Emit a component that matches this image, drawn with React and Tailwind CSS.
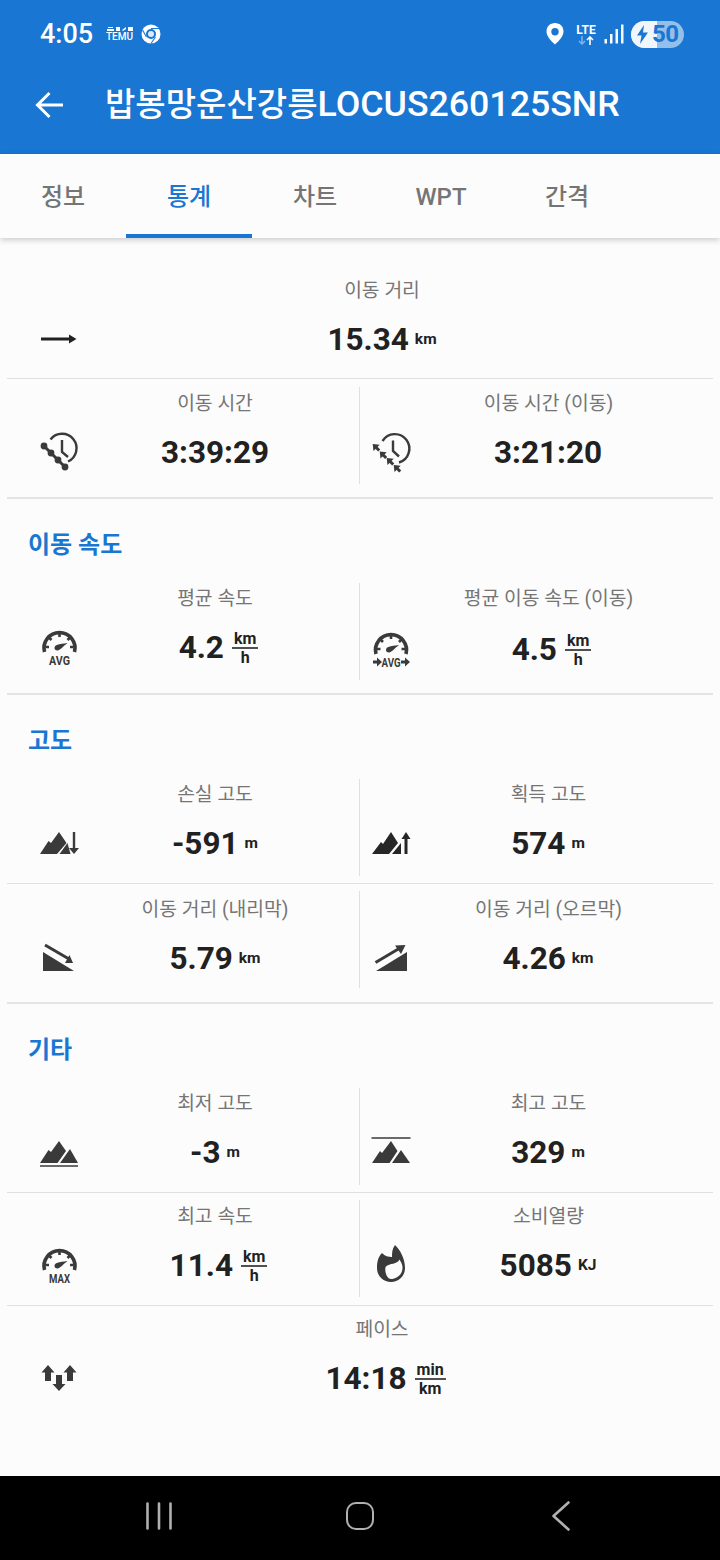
import React from "react";

const DARK = "#3a3a3a";

// all stat icons share a 40x40 box, centered on the value line
const IconBox = ({ children }) => (
    <svg width="40" height="40" viewBox="0 0 40 40" fill={DARK} className="block shrink-0 overflow-visible">
        {children}
    </svg>
);

const ArrowRightIcon = () => (
    <IconBox>
        <path d="M2 20 H32" stroke="#212121" strokeWidth="3" fill="none" />
        <path d="M30 15.5 L37.5 20 L30 24.5 Z" fill="#212121" />
    </IconBox>
);

const ClockChainIcon = () => (
    <IconBox>
        <path d="M11.5 7.5 A14.5 14.5 0 1 1 29 29.5" stroke={DARK} strokeWidth="2.4" fill="none" />
        <path d="M23 8 V20 L29 25" stroke={DARK} strokeWidth="2.4" fill="none" />
        <path d="M5 14 L26 35" stroke={DARK} strokeWidth="3" />
        <circle cx="5" cy="14" r="3.4" />
        <circle cx="12" cy="21" r="3.4" />
        <circle cx="19" cy="28" r="3.4" />
        <circle cx="26" cy="35" r="3.4" />
    </IconBox>
);

const SmallArrow = ({ x, y }) => (
    <g transform={`translate(${x} ${y})`}>
        <path d="M0 0 L7 0.8 L0.8 7 Z" />
        <path d="M2.5 2.5 L6.5 6.5" stroke={DARK} strokeWidth="3" />
    </g>
);

const ClockArrowsIcon = () => (
    <IconBox>
        <path d="M11.5 9 A14.5 14.5 0 1 1 28 30.5" stroke={DARK} strokeWidth="2.4" fill="none" />
        <path d="M22 8.5 V19 L28 24.5" stroke={DARK} strokeWidth="2.4" fill="none" />
        <SmallArrow x={1.7} y={12} />
        <SmallArrow x={8.7} y={19.5} />
        <SmallArrow x={15.7} y={26} />
        <SmallArrow x={22.7} y={33} />
    </IconBox>
);

const GaugeDial = ({ cx = 20.5 }) => (
    <g>
        <path d={`M${cx - 15} 25 A15.5 15.5 0 1 1 ${cx + 15} 25`} stroke={DARK} strokeWidth="3.6" fill="none" />
        <path
            d={`M${cx} 6 V10 M${cx - 10.5} 10.5 L${cx - 8} 13 M${cx + 10.5} 10.5 L${cx + 8} 13 M${cx - 14} 20 H${cx - 10.5} M${cx + 14} 20 H${cx + 10.5}`}
            stroke={DARK}
            strokeWidth="2.6"
            fill="none"
        />
        <path d={`M${cx - 5} 21 C${cx - 5} 18 ${cx - 1} 17 ${cx + 8} 16 C${cx + 4} 19 ${cx + 1} 23 ${cx - 2} 23.5 C${cx - 4} 23.5 ${cx - 5} 22.5 ${cx - 5} 21 Z`} />
    </g>
);

const GaugeIcon = ({ label }) => (
    <IconBox>
        <GaugeDial />
        <text x="20.5" y="37.5" fontSize="12.5" fontWeight="700" textAnchor="middle" textLength="21" lengthAdjust="spacingAndGlyphs" fontFamily="Roboto, sans-serif" fill={DARK}>
            {label}
        </text>
    </IconBox>
);

const GaugeMovingIcon = () => (
    <IconBox>
        <GaugeDial cx={20} />
        <text x="20" y="37.5" fontSize="12.5" fontWeight="700" textAnchor="middle" textLength="19" lengthAdjust="spacingAndGlyphs" fontFamily="Roboto, sans-serif" fill={DARK}>
            AVG
        </text>
        <path d="M2 31.5 H6 V28.5 L11 33 L6 37.5 V34.5 H2 Z" />
        <path d="M30 31.5 H34 V28.5 L39 33 L34 37.5 V34.5 H30 Z" />
    </IconBox>
);

const MountainDownIcon = () => (
    <IconBox>
        <path d="M1 31 L9.5 18 L12 20 L20 9 L27.5 20 L18 31 Z" />
        <path d="M20.5 31 L28.5 20 L31.5 31 Z" />
        <path d="M35 9 V26" stroke={DARK} strokeWidth="2.4" />
        <path d="M30 25 H40 L35 31 Z" />
    </IconBox>
);

const MountainUpIcon = () => (
    <IconBox>
        <path d="M1 31 L10 19 L12 21 L20 9 L27 20 L18 31 Z" fill="#262626" />
        <path d="M21 31 L30 20 V31 Z" fill="#262626" />
        <path d="M35 14 V31" stroke="#262626" strokeWidth="3" />
        <path d="M35 9 L39.5 16 H30.5 Z" fill="#262626" />
    </IconBox>
);

const DownhillIcon = () => (
    <IconBox>
        <path d="M4 14 V33 H35 Z" />
        <path d="M6 7 L30 21" stroke={DARK} strokeWidth="3" />
        <path d="M34 25 H26 L30.5 17 Z" />
    </IconBox>
);

const UphillIcon = () => (
    <IconBox>
        <path d="M5 33 H36 V14 Z" />
        <path d="M4.5 24.5 L29 10" stroke={DARK} strokeWidth="3" />
        <path d="M34.5 7 L24 7.5 L30 16 Z" />
    </IconBox>
);

const LowestIcon = () => (
    <IconBox>
        <path d="M1 31 L9.5 18 L12 20 L20 9 L27 19 L18.5 31 Z" />
        <path d="M21 31 L31 17 L39 31 Z" />
        <path d="M1 34 H39" stroke={DARK} strokeWidth="1.6" />
    </IconBox>
);

const HighestIcon = () => (
    <IconBox>
        <path d="M0.5 6 H39.5" stroke={DARK} strokeWidth="1.6" />
        <path d="M1 31 L9 19 L11 21 L20 9 L26.5 19 L18.5 31 Z" />
        <path d="M21 31 L30 18 L39 31 Z" />
    </IconBox>
);

const FlameIcon = () => (
    <IconBox>
        <path d="M24 0 C21 4 21 8 21 12 C17 12 14 11 11 8 C7 12 6 17 6 23 C6 31 12 37 20 37 C28 37 34 31 34 23 C34 13 29 5 24 0 Z" />
        <path d="M14.5 22 C19 17.5 26 20 28.5 14.5 C31.5 19 32.5 23 30.5 27.5 C28.5 31.5 24 34 20 34 C16 34 13.5 27 14.5 22 Z" fill="#fcfcfc" />
    </IconBox>
);

const PaceIcon = () => (
    <IconBox>
        <path d="M9 7 L15.5 14.5 H12 V23 H6 V14.5 H2.5 Z" />
        <path d="M31 7 L37.5 14.5 H34 V23 H28 V14.5 H24.5 Z" />
        <path d="M17 17 H23 V26 H26.5 L20 33 L13.5 26 H17 Z" />
    </IconBox>
);

// km / h style stacked unit
const Fraction = ({ top, bottom }) => (
    <span className="ml-2 flex flex-col items-center text-[16px] font-bold leading-[17px] text-[#212121]">
        <span className="px-[2px]">{top}</span>
        <span className="h-[1.5px] w-full bg-[#505050]"></span>
        <span>{bottom}</span>
    </span>
);

const Value = ({ value, unit, frac }) => (
    <div className={`flex flex-1 translate-y-px items-center justify-center ${frac ? "pl-[7px]" : ""}`}>
        <span className="text-[31.5px] font-bold leading-10 text-[#212121]">{value}</span>
        {unit && <span className="ml-[6px] text-[15.5px] font-bold text-[#212121]">{unit}</span>}
        {frac && <Fraction top={frac[0]} bottom={frac[1]} />}
    </div>
);

const labelPad = {
    left: "ml-[64px]",
    right: "ml-[24px]",
    full: "ml-[44px]",
};

const iconPad = {
    left: "ml-[32px] -mr-[8px]",
    right: "ml-[11px] -mr-[28px]",
    full: "ml-[32px] -mr-[28px]",
};

const Cell = ({ side = "left", label, icon, value, unit, frac, className = "", valueGap = "mt-4" }) => (
    <div className={`flex h-[97px] flex-col ${side === "right" ? "border-l border-[#e0e0e0]" : ""} ${className}`}>
        <div className={`h-7 text-center text-[19.3px] leading-[32px] text-[#757575] ${labelPad[side]}`}>{label}</div>
        <div className={`flex h-10 items-center ${valueGap}`}>
            <div className={iconPad[side]}>{icon}</div>
            <Value value={value} unit={unit} frac={frac} />
        </div>
    </div>
);

const Row = ({ className = "", children }) => (
    <div className={`mx-[7px] grid grid-cols-[352px_354px] ${className}`}>{children}</div>
);

const Divider = () => <div className="mx-[7px] h-px bg-[#e0e0e0]"></div>;
const SectionDivider = () => <div className="mx-[7px] h-[2px] bg-[#e4e4e4]"></div>;

const SectionTitle = ({ children }) => (
    <div className="h-[84px] pt-[32px] pl-[28px] text-[24px] font-bold leading-7 text-[#1976d2]">{children}</div>
);

const Tab = ({ label, active }) => (
    <div
        className={`relative flex w-[126px] items-center justify-center pt-[2px] text-[24px] font-medium ${
            active ? "text-[#1976d2]" : "text-[#757575]"
        }`}
    >
        {label}
        {active && <div className="absolute bottom-0 left-0 h-1 w-full bg-[#1976d2]"></div>}
    </div>
);

const StatusBar = () => (
    <div className="flex h-[68px] items-center justify-between pr-[36px] pl-[40px] text-white">
        <div className="flex items-center">
            <span className="w-[54px] text-[27px] font-medium leading-none">4:05</span>
            {/* temu notification */}
            <div className="ml-[12px] flex w-[27px] flex-col items-center">
                <svg width="26" height="6" viewBox="0 0 26 6" fill="white">
                    <path d="M1 1 H6 V2 H1 Z M0 3 H7 V5 H0 Z M9 1 H13 V5 H9 Z M15 4 L19 1 V3 L16 5 Z M21 1 H26 V5 H21 Z" />
                </svg>
                <span className="text-[10px] font-medium leading-[10px]">TEMU</span>
            </div>
            {/* chrome notification */}
            <svg width="20" height="20" viewBox="0 0 20 20" className="ml-[8px]">
                <circle cx="10" cy="10" r="9.5" fill="white" />
                <circle cx="10" cy="10" r="5" fill="#1976d2" />
                <circle cx="10" cy="10" r="3" fill="#dcebf8" />
                <path d="M10 4.5 H19 M5.5 13 L1.5 6 M14.5 13 L10 19.5" stroke="#1976d2" strokeWidth="1.1" />
            </svg>
        </div>
        <div className="flex items-center">
            <svg width="18" height="22" viewBox="0 0 18 22">
                <path fillRule="evenodd" fill="white" d="M9 0 C14 0 17.5 3.5 17.5 8.5 C17.5 13 13 18 9 21.5 C5 18 0.5 13 0.5 8.5 C0.5 3.5 4 0 9 0 Z M9 5 A3.7 3.7 0 1 0 9 12.4 A3.7 3.7 0 1 0 9 5 Z" />
            </svg>
            <div className="ml-[11px] flex w-[22px] flex-col items-center">
                <span className="text-[12px] font-bold leading-[12px]">LTE</span>
                <svg width="16" height="9" viewBox="0 0 16 9" fill="none" strokeWidth="1.6">
                    <path d="M4 0 V8 M1 5 L4 8 L7 5" stroke="#7fb1e6" />
                    <path d="M12 9 V1 M9 4 L12 1 L15 4" stroke="white" />
                </svg>
            </div>
            <svg width="20" height="20" viewBox="0 0 20 20" fill="white" className="ml-[7px]">
                <rect x="0.5" y="15" width="2.5" height="4.5" />
                <rect x="6" y="10" width="2.5" height="9.5" />
                <rect x="11.5" y="5" width="2.5" height="14.5" opacity="0.95" />
                <rect x="17" y="0.5" width="2.5" height="19" opacity="0.95" />
            </svg>
            {/* battery pill */}
            <div className="relative ml-[7px] flex h-[27px] w-[53px] items-center overflow-hidden rounded-full bg-[#94bfea]">
                <div className="absolute inset-y-0 left-0 w-[26px] bg-[#f1f6fc]"></div>
                <svg width="13" height="19" viewBox="0 0 13 19" fill="#1976d2" className="relative ml-[5px]">
                    <path d="M8 0 L1 10.5 H5.5 L4 19 L12 7.5 H7 Z" />
                </svg>
                <span className="relative ml-[3px] text-[24px] font-bold leading-none tracking-[-0.5px] text-[#1976d2]">50</span>
            </div>
        </div>
    </div>
);

const NavBar = () => (
    <div className="flex h-[84px] items-center bg-black pb-[4px]">
        <svg width="26" height="28" viewBox="0 0 26 28" stroke="#b0b0b0" strokeWidth="2.6" strokeLinecap="round" className="ml-[146px]">
            <path d="M1.5 1.5 V26.5 M13 1.5 V26.5 M24.5 1.5 V26.5" />
        </svg>
        <div className="ml-[174px] h-[28px] w-[28px] rounded-[10px] border-[2.5px] border-[#b0b0b0]"></div>
        <svg width="18" height="30" viewBox="0 0 18 30" fill="none" stroke="#b0b0b0" strokeWidth="2.6" strokeLinecap="round" strokeLinejoin="round" className="ml-[178px]">
            <path d="M16.5 1.5 L1.5 15 L16.5 28.5" />
        </svg>
    </div>
);

export default function App() {
    return (
        <div className="flex h-[1560px] w-[720px] flex-col bg-[#fcfcfc] font-[Roboto,'Noto_Sans_CJK_KR',sans-serif]">
            {/* Header */}
            <div className="bg-[#1976d2]">
                <StatusBar />
                <div className="flex h-[86px] items-center pb-[12px] text-white">
                    <svg width="30" height="28" viewBox="0 0 30 28" fill="none" stroke="white" strokeWidth="3" className="ml-[35px]">
                        <path d="M28 14 H3 M14.5 2 L2.5 14 L14.5 26" />
                    </svg>
                    <h1 className="ml-[40px] whitespace-nowrap text-[33px] font-medium leading-none">
                        밥봉망운산강릉<span className="text-[35.7px]">LOCUS260125SNR</span>
                    </h1>
                </div>
            </div>

            {/* Tabs */}
            <div className="relative z-10 flex h-[84px] shrink-0 bg-[#fcfcfc] shadow-[0_2px_6px_rgba(0,0,0,0.2)]">
                <Tab label="정보" />
                <Tab label="통계" active />
                <Tab label="차트" />
                <Tab label="WPT" />
                <Tab label="간격" />
            </div>

            {/* Stats */}
            <div className="flex flex-1 flex-col">
                <div className="mx-[7px] h-[140px] pt-[37px]">
                    <Cell side="full" label="이동 거리" icon={<ArrowRightIcon />} value="15.34" unit="km" />
                </div>
                <Divider />
                <Row className="pt-2 pb-[13px]">
                    <Cell label="이동 시간" icon={<ClockChainIcon />} value="3:39:29" className="pt-px" />
                    <Cell side="right" label="이동 시간 (이동)" icon={<ClockArrowsIcon />} value="3:21:20" className="pt-px" />
                </Row>
                <SectionDivider />

                <SectionTitle>이동 속도</SectionTitle>
                <Row className="pb-[13px]">
                    <Cell label="평균 속도" icon={<GaugeIcon label="AVG" />} value="4.2" frac={["km", "h"]} />
                    <Cell side="right" label="평균 이동 속도 (이동)" icon={<GaugeMovingIcon />} value="4.5" frac={["km", "h"]} valueGap="mt-[18px]" />
                </Row>
                <SectionDivider />

                <SectionTitle>고도</SectionTitle>
                <Row className="pb-[7px]">
                    <Cell label="손실 고도" icon={<MountainDownIcon />} value="-591" unit="m" />
                    <Cell side="right" label="획득 고도" icon={<MountainUpIcon />} value="574" unit="m" />
                </Row>
                <Divider />
                <Row className="pt-[7px] pb-[14px]">
                    <Cell label="이동 거리 (내리막)" icon={<DownhillIcon />} value="5.79" unit="km" className="pt-[3px]" />
                    <Cell side="right" label="이동 거리 (오르막)" icon={<UphillIcon />} value="4.26" unit="km" className="pt-[3px]" />
                </Row>
                <SectionDivider />

                <SectionTitle>기타</SectionTitle>
                <Row className="pb-[7px]">
                    <Cell label="최저 고도" icon={<LowestIcon />} value="-3" unit="m" />
                    <Cell side="right" label="최고 고도" icon={<HighestIcon />} value="329" unit="m" />
                </Row>
                <Divider />
                <Row className="pt-[7px] pb-2">
                    <Cell label="최고 속도" icon={<GaugeIcon label="MAX" />} value="11.4" frac={["km", "h"]} className="pt-px" />
                    <Cell side="right" label="소비열량" icon={<FlameIcon />} value="5085" unit="KJ" className="pt-px" />
                </Row>
                <Divider />
                <div className="mx-[7px] pt-2">
                    <Cell side="full" label="페이스" icon={<PaceIcon />} value="14:18" frac={["min", "km"]} />
                </div>
            </div>

            <NavBar />
        </div>
    );
}
